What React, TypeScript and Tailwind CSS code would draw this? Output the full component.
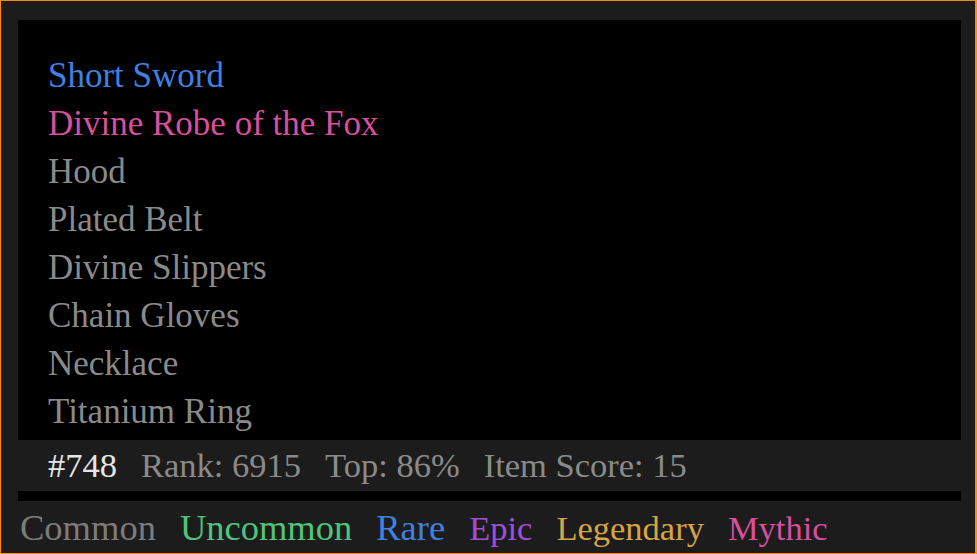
const items = [
  { name: "Short Sword", color: "text-[#3f80e0]" },
  { name: "Divine Robe of the Fox", color: "text-[#d84f9e]" },
  { name: "Hood", color: "text-[#8a8a8a]" },
  { name: "Plated Belt", color: "text-[#8a8a8a]" },
  { name: "Divine Slippers", color: "text-[#8a8a8a]" },
  { name: "Chain Gloves", color: "text-[#8a8a8a]" },
  { name: "Necklace", color: "text-[#8a8a8a]" },
  { name: "Titanium Ring", color: "text-[#8a8a8a]" },
];

const rarities = [
  { name: "Common", color: "text-[#7c7c7c] text-[36.5px]" },
  { name: "Uncommon", color: "text-[#4fc47a] text-[36.5px]" },
  { name: "Rare", color: "text-[#3f80e0] text-[36.5px]" },
  { name: "Epic", color: "text-[#a34ed8] text-[34.5px]" },
  { name: "Legendary", color: "text-[#d9a542] text-[34.5px]" },
  { name: "Mythic", color: "text-[#d84f9e] text-[34.5px]" },
];

export default function App() {
  return (
    <div
      className="flex h-[554px] w-[977px] flex-col border-y border-l border-r-2 border-[#ff8a00] bg-[#1c1c1c]"
      style={{ fontFamily: '"Liberation Serif", "Times New Roman", serif' }}
    >
      <div className="ml-[17px] mt-[19px] flex w-[943px] flex-col bg-black px-[30px] pb-[4px] pt-[32px]">
        {items.map((item) => (
          <div key={item.name} className={`text-[35px] leading-[48px] ${item.color}`}>
            {item.name}
          </div>
        ))}
      </div>

      <div className="flex h-[51px] items-center gap-[24px] pl-[47px] text-[34.5px] leading-[51px] text-[#8a8a8a]">
        <span className="text-[#e6e6e6]">#748</span>
        <span>Rank: 6915</span>
        <span>Top: 86%</span>
        <span>Item Score: 15</span>
      </div>

      <div className="ml-[17px] h-[10px] w-[943px] bg-black" />

      <div className="flex h-[52px] items-baseline gap-[24px] pl-[19px] pt-[2px] leading-[50px]">
        {rarities.map((r) => (
          <span key={r.name} className={r.color}>
            {r.name}
          </span>
        ))}
      </div>
    </div>
  );
}
